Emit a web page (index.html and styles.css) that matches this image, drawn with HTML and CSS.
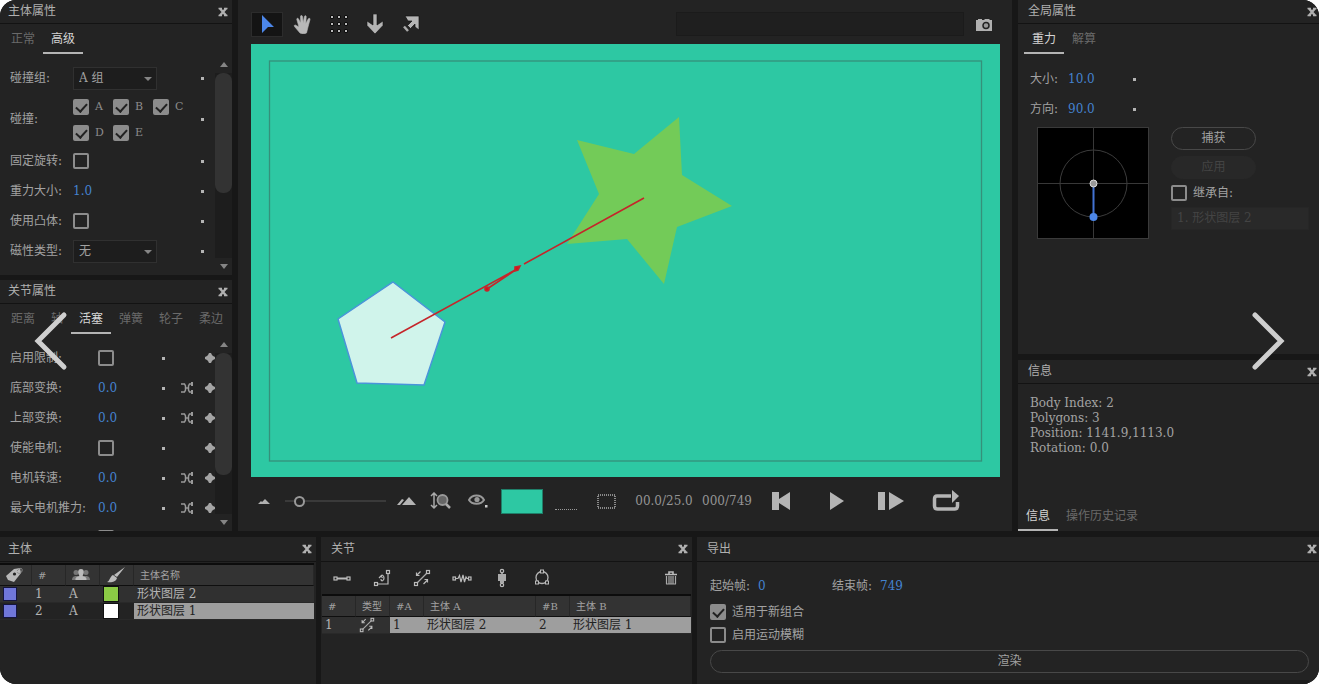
FILE: index.html
```html
<!DOCTYPE html>
<html lang="zh-CN">

<head>
    <meta charset="UTF-8">
    <meta name="viewport" content="width=device-width, initial-scale=1.0">
    <title>动力学</title>
    <link rel="stylesheet" href="styles.css">
</head>

<body>
    <svg class="symbols" aria-hidden="true">
        <symbol id="i-close" viewBox="0 0 10 10">
            <path d="M2 1.500L8 8.500M8 1.500L2 8.500" stroke="#b0b0b0" stroke-width="2.400" />
            <path d="M0.500 1.500h3.500M6 1.500h3.500M0.500 8.500H4M6 8.500h3.500" stroke="#b0b0b0" stroke-width="1.400" />
        </symbol>
        <symbol id="i-shuffle" viewBox="0 0 14 12">
            <path d="M1 2h3.500l1 2v4l-1 2H1M12 2H9.500l-1 2v4l1 2H12M5 6h4" fill="none" stroke="#999" stroke-width="1.500" />
            <path d="M11 0h2v4h-2zM11 8h2v4h-2z" fill="#999" />
        </symbol>
        <symbol id="i-key" viewBox="0 0 10 10">
            <path d="M4 0h2l1 2 1 1 2 1v2L8 7 7 8l-1 2H4L3 8 2 7 0 6V4l2-1 1-1z" fill="#a4a4a4" />
        </symbol>
        <symbol id="i-piston" viewBox="0 0 18 18">
            <path d="M4 14L14 4" stroke="#aaa" stroke-width="1.200" />
            <g fill="none" stroke="#bbb" stroke-width="1.200">
                <rect x="1.500" y="13.500" width="3" height="3" />
                <rect x="13.500" y="1.500" width="3" height="3" />
                <path d="M7.500 2.500L4 6M3.500 3.500v3h3M10.500 15l4-4M11.500 10.500h3v3" />
            </g>
        </symbol>
    </svg>

    <div class="app">
        <div class="top">
            <div class="side">
                <section class="panel body-props">
                    <header class="title">
                        <h2>主体属性</h2>
                        <button class="close" aria-label="关闭"><svg><use href="#i-close" /></svg></button>
                    </header>
                    <nav class="tabs">
                        <button class="tab">正常</button>
                        <button class="tab active">高级</button>
                    </nav>
                    <div class="scroll-area">
                        <form class="rows">
                            <div class="row">
                                <label for="group">碰撞组:</label>
                                <span class="select"><select id="group"><option>A 组</option></select></span>
                                <i class="dot"></i>
                            </div>
                            <div class="row tall">
                                <span>碰撞:</span>
                                <div class="checks">
                                    <label><input type="checkbox" checked>A</label>
                                    <label><input type="checkbox" checked>B</label>
                                    <label><input type="checkbox" checked>C</label>
                                    <label><input type="checkbox" checked>D</label>
                                    <label><input type="checkbox" checked>E</label>
                                </div>
                                <i class="dot"></i>
                            </div>
                            <div class="row">
                                <label for="fixed">固定旋转:</label>
                                <input type="checkbox" id="fixed">
                                <i class="dot"></i>
                            </div>
                            <div class="row">
                                <label for="gscale">重力大小:</label>
                                <input type="text" class="value" id="gscale" value="1.0">
                                <i class="dot"></i>
                            </div>
                            <div class="row">
                                <label for="convex">使用凸体:</label>
                                <input type="checkbox" id="convex">
                                <i class="dot"></i>
                            </div>
                            <div class="row">
                                <label for="magnet">磁性类型:</label>
                                <span class="select"><select id="magnet"><option>无</option></select></span>
                                <i class="dot"></i>
                            </div>
                        </form>
                        <div class="scrollbar"><i class="up"></i><div class="track"><div class="thumb"></div></div><i class="down"></i></div>
                    </div>
                </section>

                <section class="panel joint-props">
                    <header class="title">
                        <h2>关节属性</h2>
                        <button class="close" aria-label="关闭"><svg><use href="#i-close" /></svg></button>
                    </header>
                    <nav class="tabs">
                        <button class="tab">距离</button>
                        <button class="tab">轴</button>
                        <button class="tab active">活塞</button>
                        <button class="tab">弹簧</button>
                        <button class="tab">轮子</button>
                        <button class="tab">柔边</button>
                    </nav>
                    <div class="scroll-area">
                        <form class="rows wide">
                            <div class="row">
                                <label for="limit">启用限制:</label>
                                <input type="checkbox" id="limit">
                                <i class="dot"></i>
                                <span></span>
                                <svg class="key"><use href="#i-key" /></svg>
                            </div>
                            <div class="row">
                                <label for="lower">底部变换:</label>
                                <input type="text" class="value" id="lower" value="0.0">
                                <i class="dot"></i>
                                <svg class="shuffle"><use href="#i-shuffle" /></svg>
                                <svg class="key"><use href="#i-key" /></svg>
                            </div>
                            <div class="row">
                                <label for="upper">上部变换:</label>
                                <input type="text" class="value" id="upper" value="0.0">
                                <i class="dot"></i>
                                <svg class="shuffle"><use href="#i-shuffle" /></svg>
                                <svg class="key"><use href="#i-key" /></svg>
                            </div>
                            <div class="row">
                                <label for="motor">使能电机:</label>
                                <input type="checkbox" id="motor">
                                <i class="dot"></i>
                                <span></span>
                                <svg class="key"><use href="#i-key" /></svg>
                            </div>
                            <div class="row">
                                <label for="speed">电机转速:</label>
                                <input type="text" class="value" id="speed" value="0.0">
                                <i class="dot"></i>
                                <svg class="shuffle"><use href="#i-shuffle" /></svg>
                                <svg class="key"><use href="#i-key" /></svg>
                            </div>
                            <div class="row">
                                <label for="force">最大电机推力:</label>
                                <input type="text" class="value" id="force" value="0.0">
                                <i class="dot"></i>
                                <svg class="shuffle"><use href="#i-shuffle" /></svg>
                                <svg class="key"><use href="#i-key" /></svg>
                            </div>
                            <div class="row">
                                <span></span>
                                <input type="checkbox" aria-label="碰撞">
                            </div>
                        </form>
                        <div class="scrollbar"><i class="up"></i><div class="track"><div class="thumb"></div></div><i class="down"></i></div>
                    </div>
                </section>
            </div>

            <main class="panel stage">
                <div class="toolbar">
                    <button class="tool active" aria-label="选择">
                        <svg width="16" height="20" viewBox="0 0 16 20"><path d="M3 1l12 12H9l-6 6z" fill="#4c86e8" /></svg>
                    </button>
                    <button class="tool" aria-label="抓手">
                        <svg width="20" height="20" viewBox="0 0 20 20"><path d="M7 19L1.500 12.500c-.8-1.500.8-2 1.800-1L6 13 3.800 5.500c-.3-1.300 1.300-1.700 1.800-.5L7.700 9 7.500 2.500c0-1.300 1.800-1.300 2 0L10.200 9l1.200-6.500c.3-1.300 2-1 1.800.3L12.800 9.500l2.500-4.700c.7-1.100 2.100-.4 1.700.8L15 13l-1.500 6c-1.500 1-5 1-6.500 0z" fill="#b8b8b8" stroke="#b8b8b8" stroke-width=".6" /></svg>
                    </button>
                    <button class="tool" aria-label="网格">
                        <svg width="18" height="18" viewBox="0 0 18 18"><g fill="#bbb" stroke="#0c0c0c"><path d="M.5.500h3v3h-3zM7.500.500h3v3h-3zM14.500.500h3v3h-3zM.5 7.500h3v3h-3zM7.500 7.500h3v3h-3zM14.500 7.500h3v3h-3zM.5 14.500h3v3h-3zM7.500 14.500h3v3h-3zM14.500 14.500h3v3h-3z" /></g></svg>
                    </button>
                    <button class="tool" aria-label="向下">
                        <svg width="18" height="20" viewBox="0 0 18 20"><path d="M7 0h4v11l6-4v4.500L9 20 1 11.500V7l6 4z" fill="#b4b4b4" stroke="#111" stroke-width=".6" /></svg>
                    </button>
                    <button class="tool" aria-label="方向">
                        <svg width="18" height="18" viewBox="0 0 18 18"><path d="M3 1h14v14l-4-3V9l-4.500 4.500-3-3L10 6H6z" fill="#b4b4b4" stroke="#111" stroke-width=".7" /><path d="M2 11.500L6 16" stroke="#aaa" stroke-width="2.500" /></svg>
                    </button>
                    <input type="text" class="message" aria-label="消息">
                    <button class="tool" aria-label="快照">
                        <svg width="16" height="13" viewBox="0 0 16 13"><path d="M0 2h2V1h4v1h2l1-1h4l1 1h2v11H0z" fill="#b0b0b0" /><circle cx="10" cy="7.500" r="3" fill="#999" stroke="#222" stroke-width="1.500" /></svg>
                    </button>
                </div>
                <svg class="viewport" viewBox="0 0 749 433" preserveAspectRatio="xMidYMid slice">
                    <rect width="749" height="433" fill="#2dc8a3" />
                    <rect x="18.500" y="17" width="712" height="400" fill="none" stroke="#35907a" stroke-width="1.300" />
                    <path d="M326 96l57 14 45-37 3 58 50 31-55 21-13 57-37-45-60 5 32-50z" fill="#73cb58" />
                    <path d="M142 238l52 40-21 63-67-2-19-64z" fill="#d0f4eb" stroke="#4a94da" stroke-width="1.500" />
                    <g stroke="#c5252a" stroke-width="1.600">
                        <path d="M140 294L266 225M273 220L393 154M236 245l30-20" />
                        <circle cx="236" cy="245" r="2" fill="#d8101c" />
                        <path d="M264 223l5-1-2 4-3 1z" fill="#d8101c" />
                    </g>
                </svg>
                <div class="playbar">
                    <svg width="12" height="7" viewBox="0 0 12 7"><path d="M0 6l3-3 1 1 3-3 5 5z" fill="#b0b0b0" /></svg>
                    <input type="range" class="zoom" min="0" max="100" value="10" aria-label="缩放">
                    <svg width="20" height="10" viewBox="0 0 20 10"><path d="M0 9l5-6 2 1-4 5zM5 9l7-8 7 8z" fill="#b4b4b4" /></svg>
                    <button aria-label="适合窗口">
                        <svg width="22" height="18" viewBox="0 0 22 18"><path d="M4 2v13M1 4l3-3 3 3M1 13l3 3 3-3" fill="none" stroke="#aaa" stroke-width="1.500" /><circle cx="12.500" cy="8" r="5" fill="#666" stroke="#999" stroke-width="1.800" /><path d="M16 12l4 4" stroke="#aaa" stroke-width="2.500" /></svg>
                    </button>
                    <button aria-label="显示">
                        <svg width="20" height="16" viewBox="0 0 20 16"><path d="M1 7c3-6 12-6 15 0-3 5-12 5-15 0z" fill="none" stroke="#999" stroke-width="2" /><circle cx="9" cy="6.500" r="2.600" fill="#999" /><rect x="17" y="12" width="2.500" height="2.500" fill="#ccc" /></svg>
                    </button>
                    <button class="color" aria-label="背景颜色"></button>
                    <i class="dotted"></i>
                    <svg width="19" height="15" viewBox="0 0 19 15"><rect x="1" y="1" width="17" height="13" fill="none" stroke="#8a8a8a" stroke-width="2" stroke-dasharray="1 1" /></svg>
                    <span>00.0/25.0</span>
                    <span>000/749</span>
                    <button aria-label="回到开头">
                        <svg width="20" height="20" viewBox="0 0 20 20"><path d="M1 1h7v7l11-7v18L8 12v7H1z" fill="#b4b4b4" /></svg>
                    </button>
                    <button aria-label="播放">
                        <svg width="16" height="20" viewBox="0 0 16 20"><path d="M1 1l14 9-14 9z" fill="#b4b4b4" /></svg>
                    </button>
                    <button aria-label="下一帧">
                        <svg width="26" height="20" viewBox="0 0 26 20"><path d="M0 1h7v18H0zM11 1l15 9-15 9z" fill="#b4b4b4" /></svg>
                    </button>
                    <button aria-label="循环">
                        <svg width="28" height="22" viewBox="0 0 28 22"><path d="M19 6H5Q2.500 6 2.500 9v7q0 3 3 3h17q3 0 3-3v-4" fill="none" stroke="#b4b4b4" stroke-width="3.500" /><path d="M20 0l7 6-7 7z" fill="#b4b4b4" /></svg>
                    </button>
                </div>
            </main>

            <div class="side right">
                <section class="panel global-props">
                    <header class="title">
                        <h2>全局属性</h2>
                        <button class="close" aria-label="关闭"><svg><use href="#i-close" /></svg></button>
                    </header>
                    <nav class="tabs">
                        <button class="tab active">重力</button>
                        <button class="tab">解算</button>
                    </nav>
                    <form class="rows gravity">
                        <div class="row">
                            <label for="size">大小:</label>
                            <input type="text" class="value" id="size" value="10.0">
                            <i class="dot"></i>
                        </div>
                        <div class="row">
                            <label for="angle">方向:</label>
                            <input type="text" class="value" id="angle" value="90.0">
                            <i class="dot"></i>
                        </div>
                    </form>
                    <div class="direction">
                        <svg class="dial" width="112" height="112" viewBox="0 0 112 112">
                            <rect x=".5" y=".5" width="111" height="111" fill="#000" stroke="#3a3a3a" />
                            <path d="M56.500 0v112M0 56.500h112" stroke="#383838" />
                            <circle cx="56.500" cy="56.500" r="33.500" fill="none" stroke="#3c3c3c" />
                            <path d="M56.500 57v33" stroke="#4272d2" stroke-width="2" />
                            <circle cx="56.500" cy="56.500" r="3.500" fill="#999" stroke="#e0e0e0" />
                            <circle cx="56.500" cy="90" r="4" fill="#4c86e8" />
                        </svg>
                        <div class="capture">
                            <button class="pill">捕获</button>
                            <button class="pill" disabled>应用</button>
                            <label class="check"><input type="checkbox">继承自:</label>
                            <select aria-label="继承自" disabled><option>1. 形状图层 2</option></select>
                        </div>
                    </div>
                </section>

                <section class="panel info">
                    <header class="title">
                        <h2>信息</h2>
                        <button class="close" aria-label="关闭"><svg><use href="#i-close" /></svg></button>
                    </header>
                    <div class="info-text">
                        <p>Body Index: 2</p>
                        <p>Polygons: 3</p>
                        <p>Position: 1141.9,1113.0</p>
                        <p>Rotation: 0.0</p>
                    </div>
                    <nav class="tabs">
                        <button class="tab active">信息</button>
                        <button class="tab">操作历史记录</button>
                    </nav>
                </section>
            </div>
        </div>

        <div class="bottom">
            <section class="panel">
                <header class="title">
                    <h2>主体</h2>
                    <button class="close" aria-label="关闭"><svg><use href="#i-close" /></svg></button>
                </header>
                <table class="list bodies">
                    <thead>
                        <tr>
                            <th class="tag-col"><svg width="18" height="16" viewBox="0 0 18 16"><path d="M0 9l8-7 6-1 1 5-7 9-6-2z" fill="#b8b8b8" /><circle cx="8.500" cy="7" r="1.600" fill="#222" /><path d="M11 4c3-4 6-3 5 0s-4 3-5 1" fill="none" stroke="#888" /></svg></th>
                            <th class="c1">#</th>
                            <th class="c1"><svg width="18" height="14" viewBox="0 0 18 14"><g fill="#777"><circle cx="4" cy="4.500" r="2.500" /><circle cx="14" cy="4.500" r="2.500" /><path d="M0 12c0-4 3-4 5-4h8c2 0 5 0 5 4z" /></g><path d="M9 1c4 0 3 5 1.500 7 4 1 4 2 4 4h-11c0-2 0-3 4-4C6 6 5 1 9 1z" fill="#bbb" /></svg></th>
                            <th class="c1"><svg width="20" height="16" viewBox="0 0 20 16"><path d="M19 0l-8 10-3-2zM7 8l4 3c-1 4-6 5-10 4 3-1 3-6 6-7z" fill="#bbb" /></svg></th>
                            <th>主体名称</th>
                        </tr>
                    </thead>
                    <tbody>
                        <tr class="shade">
                            <td><i class="tag"></i></td>
                            <td>1</td>
                            <td>A</td>
                            <td><i class="swatch green"></i></td>
                            <td>形状图层 2</td>
                        </tr>
                        <tr>
                            <td><i class="tag"></i></td>
                            <td>2</td>
                            <td>A</td>
                            <td><i class="swatch white"></i></td>
                            <td class="selected">形状图层 1</td>
                        </tr>
                    </tbody>
                </table>
            </section>

            <section class="panel">
                <header class="title pad">
                    <h2>关节</h2>
                    <button class="close" aria-label="关闭"><svg><use href="#i-close" /></svg></button>
                </header>
                <div class="joint-tools">
                    <button aria-label="距离">
                        <svg width="18" height="18" viewBox="0 0 18 18"><g fill="none" stroke="#bbb" stroke-width="1.200"><rect x="1" y="8" width="3" height="3" /><rect x="14" y="8" width="3" height="3" /><path d="M4 9.500h10" stroke-width="2" /></g></svg>
                    </button>
                    <button aria-label="轴">
                        <svg width="18" height="18" viewBox="0 0 18 18"><g fill="none" stroke="#bbb" stroke-width="1.200"><rect x="1.500" y="13.500" width="3" height="3" /><rect x="13.500" y="1.500" width="3" height="3" /><path d="M5 15h10V5M8 10c0 3 3 2 3-1s-3-4-3-1M6 9l2-2 1.500 2" /></g></svg>
                    </button>
                    <button aria-label="活塞"><svg width="18" height="18"><use href="#i-piston" /></svg></button>
                    <button aria-label="弹簧">
                        <svg width="20" height="18" viewBox="0 0 20 18"><g fill="none" stroke="#bbb" stroke-width="1.200"><rect x="1" y="8" width="2.500" height="3" /><rect x="16.500" y="8" width="2.500" height="3" /><path d="M4 9.500h2l1.500-3L9 13l2-7 1.500 7L14 8l1 1.500h2" /></g></svg>
                    </button>
                    <button aria-label="轮子">
                        <svg width="10" height="20" viewBox="0 0 10 20"><path d="M5 5v11" stroke="#bbb" stroke-width="1.500" /><g fill="none" stroke="#bbb" stroke-width="1.200"><circle cx="5" cy="3" r="1.700" /><circle cx="5" cy="17" r="1.700" /></g><path d="M1 6h8v7H1zM3 13h4v2H3z" fill="#aaa" /></svg>
                    </button>
                    <button aria-label="柔边">
                        <svg width="16" height="18" viewBox="0 0 16 18"><g fill="none" stroke="#b4b4b4" stroke-width="1.300"><circle cx="8" cy="8.500" r="6" /></g><g fill="#222" stroke="#bbb"><rect x="6.500" y="1" width="3" height="3" /><rect x="1.500" y="12" width="3" height="3" /><rect x="11.500" y="12" width="3" height="3" /></g></svg>
                    </button>
                    <button class="trash" aria-label="删除">
                        <svg width="14" height="14" viewBox="0 0 14 14"><path d="M1 3.500h12M5 3V1h4v2" fill="none" stroke="#bbb" stroke-width="1.600" /><path d="M2.500 5v8M5 5v8M7 5v8M9 5v8M11.500 5v8M2 13h10" stroke="#aaa" stroke-width="1.200" /></svg>
                    </button>
                </div>
                <table class="list joints">
                    <thead>
                        <tr>
                            <th class="c1">#</th>
                            <th class="c1">类型</th>
                            <th class="c1">#A</th>
                            <th class="c2">主体 A</th>
                            <th class="c1">#B</th>
                            <th>主体 B</th>
                        </tr>
                    </thead>
                    <tbody>
                        <tr class="shade">
                            <td>1</td>
                            <td><svg width="16" height="16"><use href="#i-piston" /></svg></td>
                            <td class="selected">1</td>
                            <td class="selected">形状图层 2</td>
                            <td class="selected">2</td>
                            <td class="selected">形状图层 1</td>
                        </tr>
                    </tbody>
                </table>
            </section>

            <section class="panel export">
                <header class="title pad">
                    <h2>导出</h2>
                    <button class="close" aria-label="关闭"><svg><use href="#i-close" /></svg></button>
                </header>
                <form class="export-form">
                    <div class="frames">
                        <label>起始帧:<input type="text" class="value" value="0"></label>
                        <label>结束帧:<input type="text" class="value" value="749"></label>
                    </div>
                    <label class="check"><input type="checkbox" checked>适用于新组合</label>
                    <label class="check"><input type="checkbox">启用运动模糊</label>
                    <button type="button" class="pill">渲染</button>
                    <div class="progress"></div>
                </form>
            </section>
        </div>

        <button class="arrow prev" aria-label="上一张">
            <svg width="34" height="60" viewBox="0 0 34 60"><path d="M30 4L4 30l26 26" fill="none" stroke="#cfcfcf" stroke-width="5" stroke-linecap="round" /></svg>
        </button>
        <button class="arrow next" aria-label="下一张">
            <svg width="34" height="60" viewBox="0 0 34 60"><path d="M4 4l26 26L4 56" fill="none" stroke="#cfcfcf" stroke-width="5" stroke-linecap="round" /></svg>
        </button>
    </div>
</body>

</html>
```
FILE: styles.css
```css
* {
    box-sizing: border-box;
}

body {
    margin: 0;
    background-color: #fff;
    color: #a2a2a2;
    font-family: "DejaVu Serif", "Noto Sans CJK SC", serif;
    font-size: 12px;
    line-height: 15px;
}

button,
input,
select {
    margin: 0;
    padding: 0;
    border: none;
    background: none;
    color: inherit;
    font: inherit;
}

svg {
    display: block;
}

.symbols {
    position: absolute;
    width: 0;
    height: 0;
}

.app {
    position: relative;
    display: flex;
    flex-direction: column;
    gap: 6px;
    height: 100vh;
    border-radius: 16px;
    background-color: #171717;
    overflow: hidden;
}

.top {
    flex: 1;
    display: grid;
    grid-template-columns: 232px 1fr 301px;
    gap: 6px;
    min-height: 0;
}

.bottom {
    display: grid;
    grid-template-columns: 316px 371px 1fr;
    gap: 5px;
    height: 147px;
}

.side {
    display: grid;
    grid-template-rows: 275px 1fr;
    gap: 5px;
    min-height: 0;
}

.side.right {
    grid-template-rows: 1fr 171px;
    gap: 6px;
}

.panel {
    display: flex;
    flex-direction: column;
    min-width: 0;
    min-height: 0;
    background-color: #232323;
    overflow: hidden;
}

/* panel headers */
.title {
    flex: none;
    display: flex;
    align-items: center;
    justify-content: space-between;
    height: 24px;
    padding: 0 4px 0 8px;
    border-bottom: 1px solid #131313;
}

.bottom .title {
    height: 25px;
}

.title.pad,
.right .title {
    padding-left: 10px;
}

.right .title,
.export .title {
    padding-right: 2px;
}

h2 {
    margin: 0;
    font-size: 12px;
    font-weight: normal;
    color: #b0b0b0;
}

.close svg {
    width: 10px;
    height: 10px;
}

.tabs {
    flex: none;
    display: flex;
    height: 30px;
    padding-left: 3px;
}

.global-props .tabs {
    padding-left: 6px;
}

.tab {
    padding: 2px 8px 0;
    border-bottom: 2px solid transparent;
    color: #6a6a6a;
}

.tab.active {
    border-color: #b4b4b4;
    color: #d4d4d4;
}

/* property rows */
.scroll-area {
    flex: 1;
    display: flex;
    min-height: 0;
    padding-top: 9px;
}

.rows {
    flex: 1;
    min-width: 0;
    padding-left: 10px;
}

.row {
    display: grid;
    grid-template-columns: 63px minmax(0, 1fr) 25px;
    align-items: center;
    height: 30px;
}

.row.tall {
    height: 53px;
}

.wide .row {
    grid-template-columns: 88px 53px 24px 24px 16px;
}

.gravity {
    flex: none;
    padding: 10px 0 0 12px;
}

.gravity .row {
    grid-template-columns: 38px 62px 8px;
}

.dot {
    justify-self: center;
    width: 3px;
    height: 3px;
    background-color: #b4b4b4;
}

.value {
    width: 42px;
    color: #4382cf;
}

.shuffle {
    justify-self: center;
    width: 14px;
    height: 12px;
}

.key {
    justify-self: end;
    width: 10px;
    height: 10px;
}

input[type="checkbox"] {
    appearance: none;
    flex: none;
    display: flex;
    justify-content: center;
    width: 16px;
    height: 16px;
    border: 2px solid #8c8c8c;
    border-radius: 2px;
}

input[type="checkbox"]:checked {
    background-color: #8c8c8c;
}

input[type="checkbox"]:checked::after {
    content: "";
    width: 5px;
    height: 9px;
    border: solid #222;
    border-width: 0 2px 2px 0;
    transform: rotate(42deg);
}

.checks {
    display: grid;
    grid-template-columns: repeat(3, 40px);
    row-gap: 10px;
}

.checks label,
.check {
    display: flex;
    align-items: center;
    gap: 6px;
    height: 16px;
}

.checks label {
    font-size: 11px;
    color: #8c8c8c;
}

.select {
    position: relative;
    width: 84px;
}

.select::after {
    content: "";
    position: absolute;
    top: 10px;
    right: 5px;
    border: 4px solid transparent;
    border-top-color: #858585;
}

select {
    appearance: none;
    width: 84px;
    height: 23px;
    padding: 0 5px;
    border: 1px solid #303030;
    background-color: #1d1d1d;
}

/* scrollbars */
.scrollbar {
    flex: none;
    display: flex;
    flex-direction: column;
    align-items: center;
    gap: 6px;
    width: 17px;
    padding-bottom: 7px;
}

.up,
.down {
    border: 4px solid transparent;
}

.up {
    margin-top: -4px;
    border-bottom: 5px solid #858585;
    border-top: none;
}

.down {
    margin-bottom: -1px;
    border-top: 5px solid #858585;
    border-bottom: none;
}

.track {
    flex: 1;
    width: 17px;
    background-color: #1d1d1d;
}

.thumb {
    height: 65%;
    border-radius: 8px;
    background-color: #333;
}

.joint-props .thumb {
    height: 76%;
}

.scrollbar .up {
    margin-top: -1px;
}

/* stage */
.stage {
    padding: 0 12px 0 13px;
}

.toolbar {
    flex: none;
    display: flex;
    align-items: center;
    gap: 4px;
    height: 44px;
    padding-top: 4px;
}

.tool {
    display: grid;
    place-items: center;
    width: 32px;
    height: 25px;
}

.tool.active {
    border: 1px solid #2c2c2c;
    background-color: #141414;
}

.message {
    width: 288px;
    height: 24px;
    margin-left: auto;
    border: 1px solid #1b1b1b;
    background-color: #1f1f1f;
}

.viewport {
    flex: 1;
    width: 100%;
    min-height: 0;
}

.playbar {
    flex: none;
    display: grid;
    grid-template-columns: 26px 116px 27px 42px 32px 56px 32px 48px 68px 58px 50px 62px 46px 64px 1fr;
    align-items: center;
    justify-items: center;
    height: 54px;
    padding-bottom: 6px;
    color: #959595;
}

.zoom {
    appearance: none;
    width: 101px;
    height: 12px;
    background: linear-gradient(#3a3a3a, #3a3a3a) center / 100% 2px no-repeat;
}

.zoom::-webkit-slider-thumb {
    appearance: none;
    width: 11px;
    height: 11px;
    border: 2px solid #999;
    border-radius: 50%;
    background-color: #232323;
}

.color {
    width: 42px;
    height: 25px;
    border: 1px solid #1f7f69;
    background-color: #2dc8a3;
}

.dotted {
    align-self: end;
    width: 22px;
    height: 16px;
    border-top: 1px dotted #999;
}

/* gravity direction */
.direction {
    display: flex;
    gap: 22px;
    padding: 3px 10px 0 19px;
}

.dial {
    flex: none;
}

.capture {
    flex: 1;
    display: flex;
    flex-direction: column;
    gap: 6px;
}

.capture .pill {
    width: 85px;
}

.capture select {
    width: 100%;
    border-color: #262626;
    background-color: #292929;
    color: #444;
    opacity: 1;
}

.pill {
    height: 23px;
    border: 1px solid #484848;
    border-radius: 12px;
}

.pill:disabled {
    border-color: #282828;
    background-color: #282828;
    color: #444;
}

.info-text {
    flex: 1;
    padding: 12px 12px 0;
}

.info-text p {
    margin: 0;
}

.info .tabs {
    padding-left: 0;
}

/* tables */
.list {
    table-layout: fixed;
    border-spacing: 0;
    border-top: 2px solid #0c0c0c;
}

.list th {
    height: 21px;
    padding: 0 6px;
    border-right: 1px solid #272727;
    border-bottom: 1px solid #0f0f0f;
    background-color: #333;
    font-size: 10px;
    font-weight: normal;
    text-align: left;
}

.list td {
    height: 17px;
    padding: 0 3px;
    border-bottom: 1px solid #292929;
    line-height: 16px;
    color: #b4b4b4;
}

.list .shade {
    background-color: #303030;
}

.list .selected {
    background-color: #9e9e9e;
    color: #222;
}

.bodies {
    width: calc(100% - 2px);
    margin-top: 1px;
}

.list .tag-col {
    width: 32px;
}

.list .c1 {
    width: 34px;
}

.list .c2 {
    width: 112px;
}

.tag,
.swatch {
    display: block;
    width: 14px;
    height: 14px;
    border: 1px solid #151540;
    background-color: #7077d9;
}

.swatch {
    width: 16px;
    height: 16px;
    border-color: #111;
}

.green {
    background-color: #8bcb45;
}

.white {
    background-color: #fff;
}

.joints {
    width: calc(100% - 2px);
    margin-left: 1px;
}

.joint-tools {
    flex: none;
    display: flex;
    align-items: center;
    height: 32px;
    padding: 0 6px 0 1px;
}

.joint-tools button {
    display: grid;
    place-items: center;
    width: 40px;
}

.joint-tools .trash {
    width: 30px;
    margin-left: auto;
}

/* export */
.export-form {
    display: flex;
    flex-direction: column;
    gap: 7px;
    padding: 17px 10px 0 13px;
}

.frames {
    display: flex;
    gap: 32px;
    margin-bottom: 3px;
}

.frames label {
    display: flex;
    gap: 8px;
    width: 90px;
    height: 15px;
    white-space: nowrap;
}

.export-form .pill {
    flex: none;
}

.progress {
    height: 8px;
    background-color: #1c1c1c;
}

/* gallery arrows */
.arrow {
    position: absolute;
    top: calc(50% - 31px);
    cursor: pointer;
}

.prev {
    left: 34px;
}

.next {
    right: 34px;
}
```
